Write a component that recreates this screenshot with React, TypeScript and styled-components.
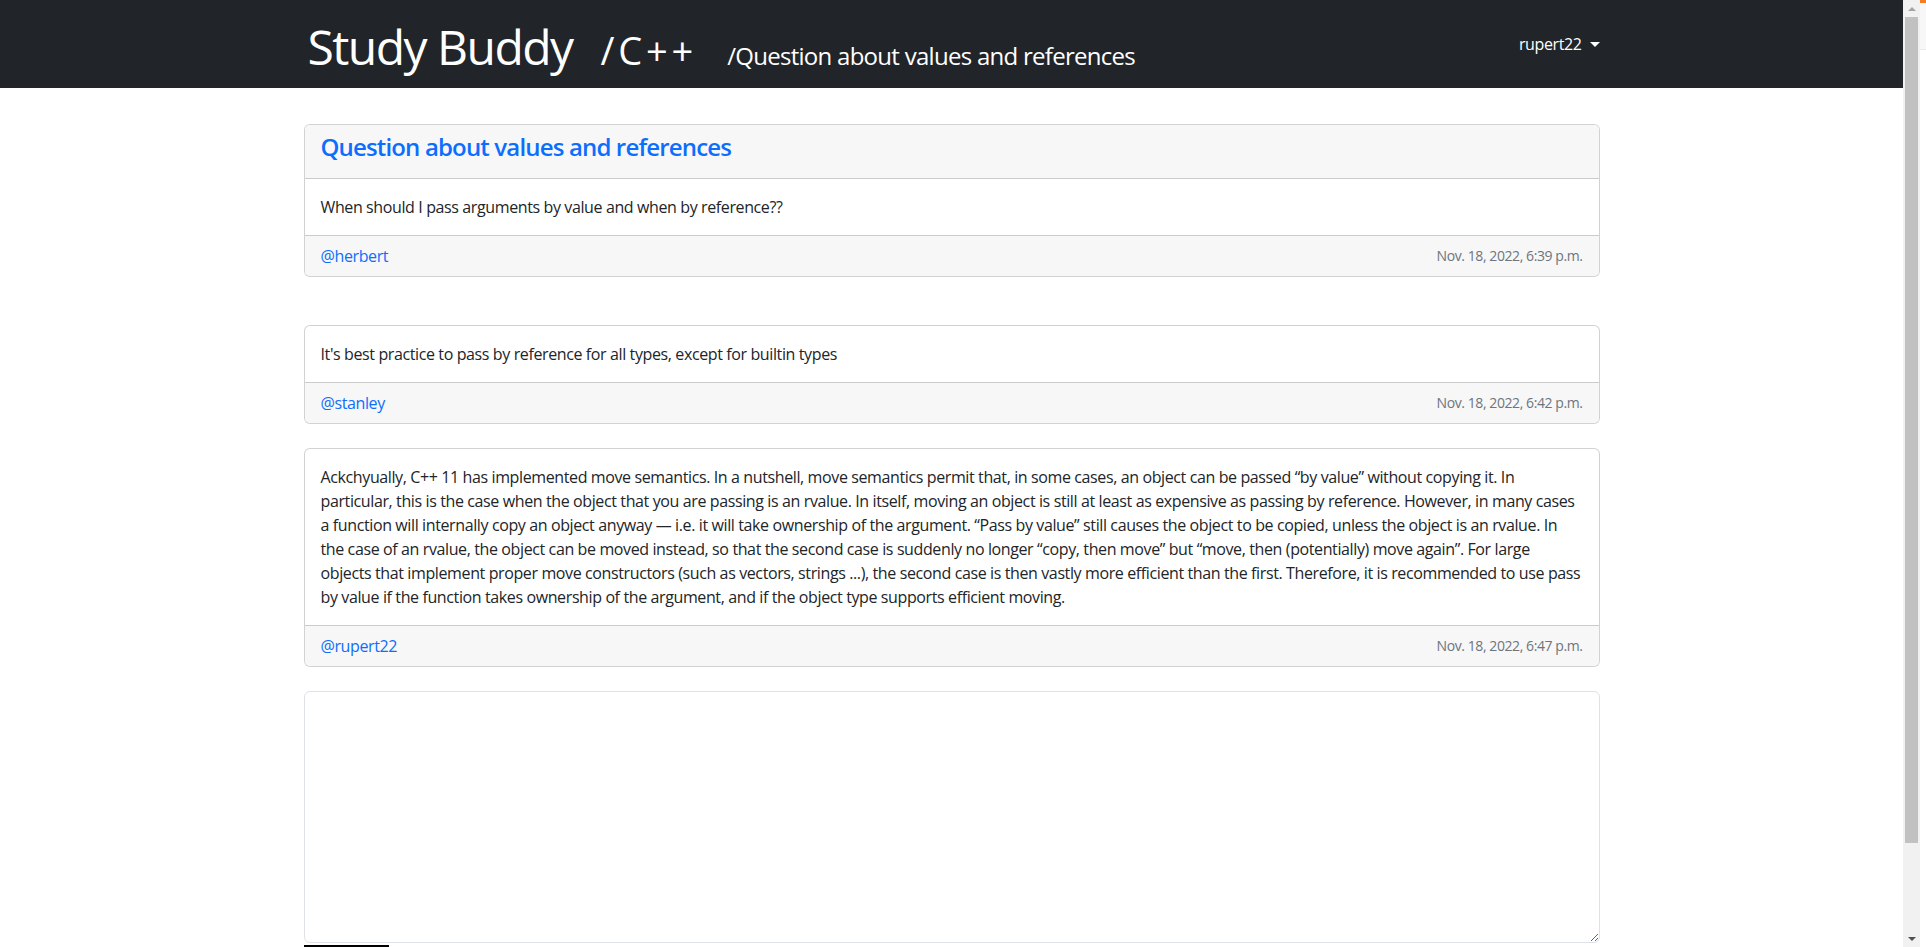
import React from "react";
import styled, { createGlobalStyle } from "styled-components";

const Global = createGlobalStyle`
  html, body {
    margin: 0;
    padding: 0;
    height: 100%;
    overflow: hidden;
    background: #fff;
  }
  body {
    font-family: "Segoe UI", "Open Sans", "Noto Sans", "Liberation Sans", sans-serif;
    font-size: 16px;
    line-height: 1.5;
    color: #212529;
  }
  *, *::before, *::after { box-sizing: border-box; }
`;

const Frame = styled.div`
  display: flex;
  height: 100vh;
  overflow: hidden;
`;

const Page = styled.div`
  flex: 1;
  min-width: 0;
  overflow: hidden;
`;

const Navbar = styled.nav`
  height: 88px;
  background: #212529;
`;

const Container = styled.div`
  max-width: 1320px;
  margin: 0 auto;
  padding: 0 12px;
`;

const NavInner = styled(Container)`
  height: 100%;
  display: flex;
  align-items: center;
  justify-content: space-between;
`;

const Crumbs = styled.div`
  display: flex;
  align-items: baseline;
  color: #fff;
  padding-top: 6px;
  margin-left: 4px;
`;

const Brand = styled.a`
  font-size: 48px;
  line-height: 1.2;
  letter-spacing: -0.032em;
  color: #fff;
  text-decoration: none;
`;

const Crumb = styled.span<{ $size: number; $gap: number; $track: number }>`
  font-size: ${(p) => p.$size}px;
  line-height: 1.2;
  letter-spacing: ${(p) => p.$track}em;
  margin-left: ${(p) => p.$gap}px;
  color: #fff;
`;

const UserToggle = styled.button`
  display: flex;
  align-items: center;
  gap: 8px;
  background: none;
  border: 0;
  padding: 8px 0;
  color: #fff;
  font: inherit;
  font-size: 16px;
  letter-spacing: -0.024em;
  cursor: pointer;
`;

const Caret = styled.span`
  width: 0;
  height: 0;
  border-left: 5px solid transparent;
  border-right: 5px solid transparent;
  border-top: 5px solid #fff;
  margin-top: 1px;
`;

const Main = styled(Container)`
  padding-top: 36px;
  display: flex;
  flex-direction: column;
`;

const Card = styled.div<{ $mb: number }>`
  border: 1px solid rgba(0, 0, 0, 0.175);
  border-radius: 6px;
  margin-bottom: ${(p) => p.$mb}px;
  background: #fff;
  overflow: hidden;
`;

const CardHeader = styled.div`
  padding: 8px 16px;
  background: #f7f7f7;
  border-bottom: 1px solid rgba(0, 0, 0, 0.175);
`;

const Title = styled.h4`
  margin: 0 0 8px;
  font-size: 24px;
  font-weight: 600;
  line-height: 1.2;
  letter-spacing: -0.035em;
  color: #0d6efd;
`;

const CardBody = styled.div`
  padding: 16px;
  font-size: 16px;
  line-height: 24px;
  letter-spacing: -0.024em;
`;

const CardFooter = styled.div`
  padding: 8px 16px;
  background: #f7f7f7;
  border-top: 1px solid rgba(0, 0, 0, 0.175);
  display: flex;
  align-items: center;
  justify-content: space-between;
  line-height: 24px;
`;

const Author = styled.a`
  color: #0d6efd;
  text-decoration: none;
  font-size: 16px;
  letter-spacing: -0.024em;
`;

const Stamp = styled.small`
  color: #6c757d;
  font-size: 14px;
  letter-spacing: -0.03em;
`;

const Reply = styled.textarea`
  display: block;
  width: 100%;
  height: 252px;
  border: 1px solid #dee2e6;
  border-radius: 6px;
  padding: 6px 12px;
  font: inherit;
  margin: 0 0 2px;
`;

const SubmitButton = styled.button`
  align-self: flex-start;
  width: 85px;
  height: 38px;
  background: #000;
  color: #fff;
  border: 0;
  border-radius: 0;
  font: inherit;
`;

const Scrollbar = styled.div`
  width: 17px;
  background: #f1f1f1;
  display: flex;
  flex-direction: column;
  align-items: center;
`;

const ScrollArrow = styled.div<{ $down?: boolean; $color: string }>`
  height: 17px;
  width: 17px;
  display: flex;
  align-items: center;
  justify-content: center;
  &::after {
    content: "";
    width: 0;
    height: 0;
    border-left: 4px solid transparent;
    border-right: 4px solid transparent;
    ${(p) =>
      p.$down
        ? `border-top: 4px solid ${p.$color};`
        : `border-bottom: 4px solid ${p.$color};`}
  }
`;

const Track = styled.div`
  flex: 1;
  width: 100%;
  display: flex;
  flex-direction: column;
  align-items: center;
`;

const Thumb = styled.div`
  width: 13px;
  height: 826px;
  background: #c1c1c1;
`;

const Edge = styled.div`
  width: 6px;
  background: #fff;
  display: flex;
  flex-direction: column;
`;

const EdgeTop = styled.div`
  height: 50px;
  background: #f7f7f7;
  border-top: 3px solid #f47b20;
  border-bottom: 1px solid #eaeaea;
`;

type Post = {
  text: string;
  author: string;
  date: string;
  mb: number;
};

const answers: Post[] = [
  {
    text: "It's best practice to pass by reference for all types, except for builtin types",
    author: "@stanley",
    date: "Nov. 18, 2022, 6:42 p.m.",
    mb: 24,
  },
  {
    text:
      "Ackchyually, C++ 11 has implemented move semantics. In a nutshell, move semantics permit that, in some cases, an object can be passed “by value” without copying it. In particular, this is the case when the object that you are passing is an rvalue. In itself, moving an object is still at least as expensive as passing by reference. However, in many cases a function will internally copy an object anyway — i.e. it will take ownership of the argument. “Pass by value” still causes the object to be copied, unless the object is an rvalue. In the case of an rvalue, the object can be moved instead, so that the second case is suddenly no longer “copy, then move” but “move, then (potentially) move again”. For large objects that implement proper move constructors (such as vectors, strings ...), the second case is then vastly more efficient than the first. Therefore, it is recommended to use pass by value if the function takes ownership of the argument, and if the object type supports efficient moving.",
    author: "@rupert22",
    date: "Nov. 18, 2022, 6:47 p.m.",
    mb: 24,
  },
];

export default function App() {
  return (
    <>
      <Global />
      <Frame>
        <Page>
          <Navbar>
            <NavInner>
              <Crumbs>
                <Brand href="#">Study Buddy</Brand>
                <Crumb $size={38} $gap={28} $track={0.1}>/C++</Crumb>
                <Crumb $size={24} $gap={30} $track={-0.03}>/Question about values and references</Crumb>
              </Crumbs>
              <UserToggle>
                rupert22 <Caret />
              </UserToggle>
            </NavInner>
          </Navbar>
          <Main>
            <Card $mb={48}>
              <CardHeader>
                <Title>Question about values and references</Title>
              </CardHeader>
              <CardBody>When should I pass arguments by value and when by reference??</CardBody>
              <CardFooter>
                <Author href="#">@herbert</Author>
                <Stamp>Nov. 18, 2022, 6:39 p.m.</Stamp>
              </CardFooter>
            </Card>
            {answers.map((a) => (
              <Card key={a.author} $mb={a.mb}>
                <CardBody>{a.text}</CardBody>
                <CardFooter>
                  <Author href="#">{a.author}</Author>
                  <Stamp>{a.date}</Stamp>
                </CardFooter>
              </Card>
            ))}
            <Reply />
            <SubmitButton>Reply</SubmitButton>
          </Main>
        </Page>
        <Scrollbar>
          <ScrollArrow $color="#a3a3a3" />
          <Track>
            <Thumb />
          </Track>
          <ScrollArrow $down $color="#505050" />
        </Scrollbar>
        <Edge>
          <EdgeTop />
        </Edge>
      </Frame>
    </>
  );
}
